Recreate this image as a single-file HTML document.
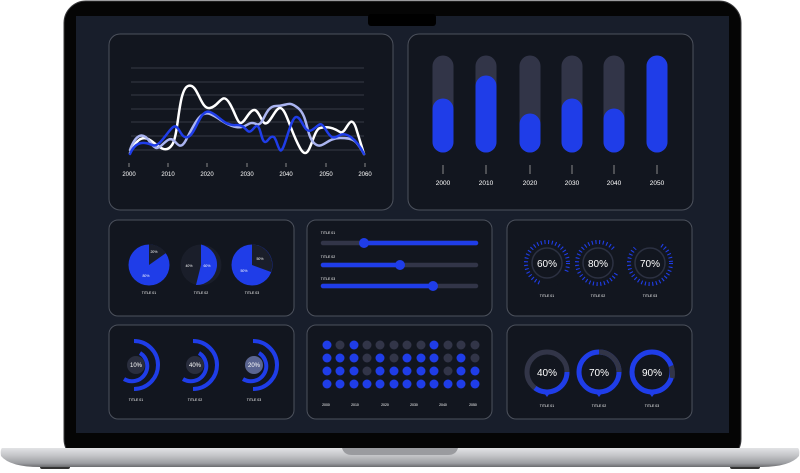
<!DOCTYPE html><html><head><style>body{margin:0;background:#fff;width:800px;height:473px;overflow:hidden}svg{display:block}text{font-family:"Liberation Sans",sans-serif;fill:#fff}</style></head><body>
<svg width="800" height="473" viewBox="0 0 800 473">
<defs><linearGradient id="base" x1="0" y1="0" x2="0" y2="1"><stop offset="0" stop-color="#e2e3e5"/><stop offset=".4" stop-color="#c4c5c8"/><stop offset=".8" stop-color="#9c9ea2"/><stop offset="1" stop-color="#6a6b6e"/></linearGradient></defs>
<rect x="64" y="1" width="677" height="460" rx="22" fill="#050505" stroke="#3a3a3c"/>
<rect x="76" y="16" width="653" height="417" fill="#181e2b"/>
<rect x="368" y="14" width="68" height="12" rx="3" fill="#000"/>
<rect x="40" y="465" width="30" height="4" rx="2" fill="#333"/><rect x="730" y="465" width="30" height="4" rx="2" fill="#333"/>
<path d="M2 448 H798 Q800 450 799 456 Q790 467 760 467 H40 Q10 467 1 456 Q0 450 2 448Z" fill="url(#base)"/>
<path d="M342 448 H458 Q456 455 448 455 H352 Q344 455 342 448Z" fill="#9a9b9f"/>
<g fill="#12161f" stroke="#4c515c" stroke-width="1">
<rect x="109" y="34" width="284" height="176" rx="11"/><rect x="408" y="34" width="285" height="176" rx="11"/>
<rect x="109" y="220" width="185" height="96" rx="9"/><rect x="307" y="220" width="185" height="96" rx="9"/><rect x="507" y="220" width="185" height="96" rx="9"/>
<rect x="109" y="325" width="185" height="94" rx="9"/><rect x="307" y="325" width="185" height="94" rx="9"/><rect x="507" y="325" width="185" height="94" rx="9"/></g>
<g stroke="#353a46" stroke-width="1"><path d="M131 68H364M131 82H364M131 95H364M131 109H364M131 122H364M131 136H364M131 150H364"/></g>
<g fill="none" stroke-width="2.5" stroke-linecap="round">
<path d="M130 153 C136 140 142 135 150 140 S165 155 172 145 S178 90 188 86 S200 110 210 108 S222 90 230 104 S238 130 246 118 S256 108 262 120 S274 108 280 108 S290 130 300 148 S312 130 320 128 S334 128 340 132 S350 110 356 128 L364 154" stroke="#fff"/>
<path d="M130 150 C135 136 142 130 150 142 S160 145 168 140 S178 155 186 140 S200 110 210 114 S225 125 236 127 S248 120 256 124 S264 106 276 106 S288 100 298 108 S306 135 314 143 S326 138 340 138 S356 140 364 154" stroke="#aab4f0"/>
<path d="M130 154 C136 140 145 142 152 145 S165 135 172 128 S180 140 188 137 S200 108 210 112 S224 126 236 125 S246 138 254 128 S260 150 268 140 S276 145 280 150 S290 118 296 117 S304 135 312 130 S320 120 326 130 S334 138 340 135 S356 138 364 154" stroke="#1f3de8"/></g>
<g stroke="#888" stroke-width="1"><path d="M129 163v4M168 163v4M207 163v4M247 163v4M286 163v4M326 163v4M365 163v4"/></g>
<g font-size="6" text-anchor="middle"><text x="129" y="176">2000</text><text x="168" y="176">2010</text><text x="207" y="176">2020</text><text x="247" y="176">2030</text><text x="286" y="176">2040</text><text x="326" y="176">2050</text><text x="365" y="176">2060</text></g>
<g stroke-linecap="round" stroke-width="21">
<g stroke="#323548"><path d="M443 66V142M486 66V142M530 66V142M572 66V142M614 66V142M657 66V142"/></g>
<g stroke="#1f3de8"><path d="M443 109V142M486 86V142M530 124V142M572 109V142M614 119V142M657 66V142"/></g></g>
<g stroke="#888" stroke-width="1"><path d="M443 165v9M486 165v9M530 165v9M572 165v9M614 165v9M657 165v9"/></g>
<g font-size="6.5" text-anchor="middle"><text x="443" y="185">2000</text><text x="486" y="185">2010</text><text x="530" y="185">2020</text><text x="572" y="185">2030</text><text x="614" y="185">2040</text><text x="657" y="185">2050</text></g>
<circle cx="149" cy="265" r="20.5" fill="#1f3de8"/><path d="M149 265V244.5A20.5 20.5 0 0 1 166 253Z" fill="#1a1e2a"/>
<circle cx="201" cy="265" r="20.5" fill="#1a1e2a"/><path d="M201 265V244.5A20.5 20.5 0 0 1 196 285Z" fill="#1f3de8"/>
<circle cx="252" cy="265" r="20.5" fill="#1f3de8"/><path d="M252 265V244.5A20.5 20.5 0 0 1 271 272Z" fill="#1a1e2a"/>
<g font-size="3.5" text-anchor="middle"><text x="154" y="253">20%</text><text x="146" y="277">80%</text><text x="189" y="267">40%</text><text x="207" y="267">60%</text><text x="260" y="260">50%</text><text x="244" y="272">50%</text>
<text x="149" y="294">TITLE 01</text><text x="201" y="294">TITLE 02</text><text x="252" y="294">TITLE 03</text>
<text x="328" y="234">TITLE 01</text><text x="328" y="258">TITLE 02</text><text x="328" y="280">TITLE 03</text></g>
<g stroke-linecap="round" stroke-width="4.5"><path d="M323 243H476M323 265H476M323 286H476" stroke="#323548"/><path d="M364 243H476M323 265H400M323 286H433" stroke="#1f3de8"/></g>
<g fill="#1f3de8"><circle cx="364" cy="243" r="5"/><circle cx="400" cy="265" r="5"/><circle cx="433" cy="286" r="5"/></g>
<g fill="none"><g stroke="#2c3142" stroke-width="1.5"><circle cx="547" cy="263" r="15"/><circle cx="598" cy="263" r="15"/><circle cx="650" cy="263" r="15"/></g>
<g stroke="#1f3de8" stroke-width="4" style="stroke-dasharray:1.1 2.6">
<circle cx="547" cy="263" r="21"/><circle cx="598" cy="263" r="21"/><circle cx="650" cy="263" r="21"/></g>
<g stroke="#12161f" stroke-width="6"><path d="M565 273A21 21 0 0 1 540 283"/><path d="M614 250A21 21 0 0 1 616 273"/><path d="M635 248A21 21 0 0 1 660 244"/></g></g>
<g font-size="10" text-anchor="middle"><text x="547" y="267">60%</text><text x="598" y="267">80%</text><text x="650" y="267">70%</text></g>
<g font-size="3.5" text-anchor="middle"><text x="547" y="297">TITLE 01</text><text x="598" y="297">TITLE 02</text><text x="650" y="297">TITLE 03</text></g>
<g fill="none" stroke="#1f3de8" stroke-width="4">
<path d="M134 341A24 24 0 0 1 134 389"/><path d="M140 353A15 15 0 0 1 124 379"/>
<path d="M193 341A24 24 0 0 1 193 389"/><path d="M199 353A15 15 0 0 1 183 379"/>
<path d="M253 341A24 24 0 0 1 253 389"/><path d="M259 353A15 15 0 0 1 243 379"/></g>
<circle cx="136" cy="365" r="9" fill="#2a2e3e"/><circle cx="195" cy="365" r="9" fill="#2a2e3e"/><circle cx="254" cy="365" r="9" fill="#5a6591"/>
<g font-size="6" text-anchor="middle"><text x="136" y="367">10%</text><text x="195" y="367">40%</text><text x="254" y="367">20%</text></g>
<g font-size="3.5" text-anchor="middle"><text x="136" y="401">TITLE 01</text><text x="195" y="401">TITLE 02</text><text x="254" y="401">TITLE 03</text></g>
<g fill="#323548"><circle cx="340" cy="345" r="4.5"/><circle cx="367" cy="345" r="4.5"/><circle cx="380" cy="345" r="4.5"/><circle cx="394" cy="345" r="4.5"/><circle cx="407" cy="345" r="4.5"/><circle cx="421" cy="345" r="4.5"/><circle cx="448" cy="345" r="4.5"/><circle cx="461" cy="345" r="4.5"/><circle cx="475" cy="345" r="4.5"/>
<circle cx="367" cy="358" r="4.5"/><circle cx="394" cy="358" r="4.5"/><circle cx="448" cy="358" r="4.5"/><circle cx="475" cy="358" r="4.5"/><circle cx="367" cy="371" r="4.5"/><circle cx="448" cy="371" r="4.5"/></g>
<g fill="#1f3de8"><circle cx="327" cy="345" r="4.5"/><circle cx="354" cy="345" r="4.5"/><circle cx="434" cy="345" r="4.5"/>
<circle cx="327" cy="358" r="4.5"/><circle cx="340" cy="358" r="4.5"/><circle cx="354" cy="358" r="4.5"/><circle cx="380" cy="358" r="4.5"/><circle cx="407" cy="358" r="4.5"/><circle cx="421" cy="358" r="4.5"/><circle cx="434" cy="358" r="4.5"/><circle cx="461" cy="358" r="4.5"/>
<circle cx="327" cy="371" r="4.5"/><circle cx="340" cy="371" r="4.5"/><circle cx="354" cy="371" r="4.5"/><circle cx="380" cy="371" r="4.5"/><circle cx="394" cy="371" r="4.5"/><circle cx="407" cy="371" r="4.5"/><circle cx="421" cy="371" r="4.5"/><circle cx="434" cy="371" r="4.5"/><circle cx="461" cy="371" r="4.5"/><circle cx="475" cy="371" r="4.5"/>
<circle cx="327" cy="384" r="4.5"/><circle cx="340" cy="384" r="4.5"/><circle cx="354" cy="384" r="4.5"/><circle cx="367" cy="384" r="4.5"/><circle cx="380" cy="384" r="4.5"/><circle cx="394" cy="384" r="4.5"/><circle cx="407" cy="384" r="4.5"/><circle cx="421" cy="384" r="4.5"/><circle cx="434" cy="384" r="4.5"/><circle cx="448" cy="384" r="4.5"/><circle cx="461" cy="384" r="4.5"/><circle cx="475" cy="384" r="4.5"/></g>
<g font-size="3.5" text-anchor="middle"><text x="326" y="406">2000</text><text x="355" y="406">2010</text><text x="385" y="406">2020</text><text x="414" y="406">2030</text><text x="443" y="406">2040</text><text x="473" y="406">2050</text></g>
<g fill="none" stroke-width="5">
<circle cx="547" cy="372" r="20" stroke="#323548"/><path d="M567 372A20 20 0 0 1 535 388" stroke="#1f3de8"/>
<circle cx="599" cy="372" r="20" stroke="#1f3de8"/><path d="M599 352A20 20 0 0 1 619 372" stroke="#323548"/>
<circle cx="652" cy="372" r="20" stroke="#1f3de8"/><path d="M671 366A20 20 0 0 1 672 378" stroke="#323548"/></g>
<g fill="#1f3de8"><path d="M544 393h6l-3 4z"/><path d="M596 393h6l-3 4z"/><path d="M649 393h6l-3 4z"/></g>
<g font-size="10" text-anchor="middle"><text x="547" y="376">40%</text><text x="599" y="376">70%</text><text x="652" y="376">90%</text></g>
<g font-size="3.5" text-anchor="middle"><text x="547" y="407">TITLE 01</text><text x="599" y="407">TITLE 02</text><text x="652" y="407">TITLE 03</text></g>
</svg></body></html>
